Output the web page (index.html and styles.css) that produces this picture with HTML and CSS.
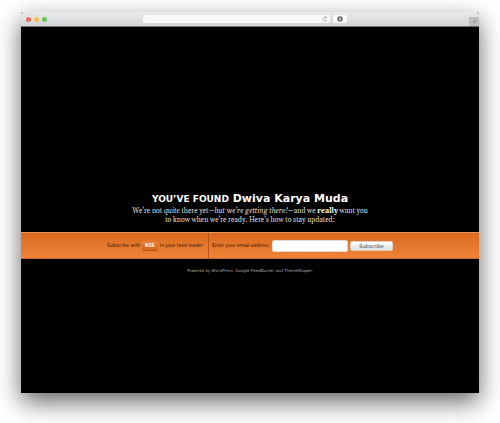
FILE: index.html
```html
<!DOCTYPE html>
<html lang="en">
<head>
<meta charset="utf-8">
<title>Dwiva Karya Muda</title>
<link rel="stylesheet" href="styles.css">
</head>
<body>
<div class="window">
  <header class="toolbar">
    <div class="lights"><i class="light red"></i><i class="light yellow"></i><i class="light green"></i></div>
    <div class="address">
      <svg class="reload" viewBox="0 0 10 10" aria-hidden="true"><path d="M7.6 3.2A3.3 3.3 0 1 0 8.3 5.5M4.8 .8L7.2 2.5L5 4" fill="none" stroke="#777" stroke-width=".9"/></svg>
    </div>
    <div class="download">
      <svg viewBox="0 0 10 10" aria-hidden="true"><circle cx="5" cy="5" r="4.6" fill="#666"/><path d="M5 2.2V6M3 5L5 7.3L7 5" fill="none" stroke="#fff" stroke-width="1.3"/></svg>
    </div>
    <div class="new-tab">
      <svg viewBox="0 0 10 10" aria-hidden="true"><path d="M5 1V9M1 5H9" stroke="#858587" stroke-width="1"/></svg>
    </div>
  </header>
  <main class="page">
    <section class="intro">
      <h1><span class="found">YOU’VE FOUND</span> Dwiva Karya Muda</h1>
      <p>We’re not <em>quite</em> there yet—<em>but we’re getting there!</em>—and we <strong>really</strong> want you<br>to know when we’re ready. Here’s how to stay updated:</p>
    </section>
    <section class="subscribe">
      <p class="feed">Subscribe with <a class="rss" href="#">RSS</a> in your feed reader</p>
      <form class="mail">
        <label for="email">Enter your email address:</label>
        <input id="email" type="email">
        <button type="button">Subscribe</button>
      </form>
    </section>
    <footer>Powered by <a href="#">WordPress</a>, <a href="#">Google FeedBurner</a> and <a href="#">ThemeShaper</a>.</footer>
  </main>
</div>
</body>
</html>
```
FILE: styles.css
```css
* { box-sizing: border-box; }
body { margin: 0; background: #fff; overflow: hidden; font-family: "DejaVu Sans", sans-serif; }
h1, p { margin: 0; }
a { color: inherit; text-decoration: none; }
svg { display: block; }

.window {
  display: flex;
  flex-direction: column;
  height: calc(100vh - 42px);
  margin: 12px 21px 30px;
  border-radius: 3px 3px 0 0;
  background: #000;
  box-shadow: 0 9px 24px rgba(0, 0, 0, .6);
}

.toolbar {
  display: grid;
  grid-template-columns: 12fr 187px 14px 13fr;
  column-gap: 3px;
  align-items: center;
  height: 15px;
  border-bottom: 1px solid #737375;
  border-radius: 3px 3px 0 0;
  background: linear-gradient(#e9e9ea, #d3d4d6);
}
.lights { display: flex; gap: 3px; padding-left: 5px; }
.light { width: 5px; height: 5px; border-radius: 50%; }
.red { background: #ed6b60; }
.yellow { background: #f5be4f; }
.green { background: #62c655; }
.address, .download { display: flex; align-items: center; height: 8px; border-radius: 2px; background: #f8f8f8; }
.address { justify-content: flex-end; padding-right: 2px; }
.download { justify-content: center; }
.address svg, .download svg { width: 6px; height: 6px; }
.new-tab {
  display: flex;
  align-items: center;
  justify-content: center;
  justify-self: end;
  align-self: end;
  width: 10px;
  height: 9px;
  background: #bdbec0;
}
.new-tab svg { width: 5px; height: 5px; }

.page { flex: 1; padding-top: 164px; color: #fff; text-align: center; }
.intro { height: 41px; }
h1 { font-size: 11px; line-height: 16px; }
.found { font-size: 9px; }
.intro p { color: #ddd; font: 7px/9px Gelasio, Georgia, "Liberation Serif", serif; }
.intro strong { color: #fff; }

.subscribe {
  display: flex;
  justify-content: center;
  height: 27px;
  border-top: 1px solid #ee965a;
  border-bottom: 1px solid #c9651f;
  background: linear-gradient(#d96a20, #f08337);
  color: #2a0f00;
  font: 5px/9px "DejaVu Sans Condensed", "DejaVu Sans", sans-serif;
}
.feed, .mail { display: flex; align-items: center; }
.feed { gap: 2px; padding-right: 5px; border-right: 1px solid #b85415; }
.rss {
  padding: 0 3px;
  border-bottom: 1px solid #b95314;
  border-radius: 2px;
  background: linear-gradient(#ec813a, #d5651d);
  color: #fff;
  font-weight: bold;
}
.mail { gap: 2px; padding-left: 3px; }
.mail input { width: 76px; height: 12px; padding: 0 2px; border: 1px solid #e6d7cc; border-radius: 2px; background: #fff; font: inherit; }
.mail button {
  width: 43px;
  height: 10px;
  padding: 0;
  border: 1px solid #d8d0ca;
  border-radius: 2px;
  background: linear-gradient(#fff, #dfdfdf);
  color: #333;
  font: 5px/8px "DejaVu Sans", sans-serif;
}
footer { padding-top: 8px; color: #aaa; font-size: 4px; font-style: italic; line-height: 8px; }
```
